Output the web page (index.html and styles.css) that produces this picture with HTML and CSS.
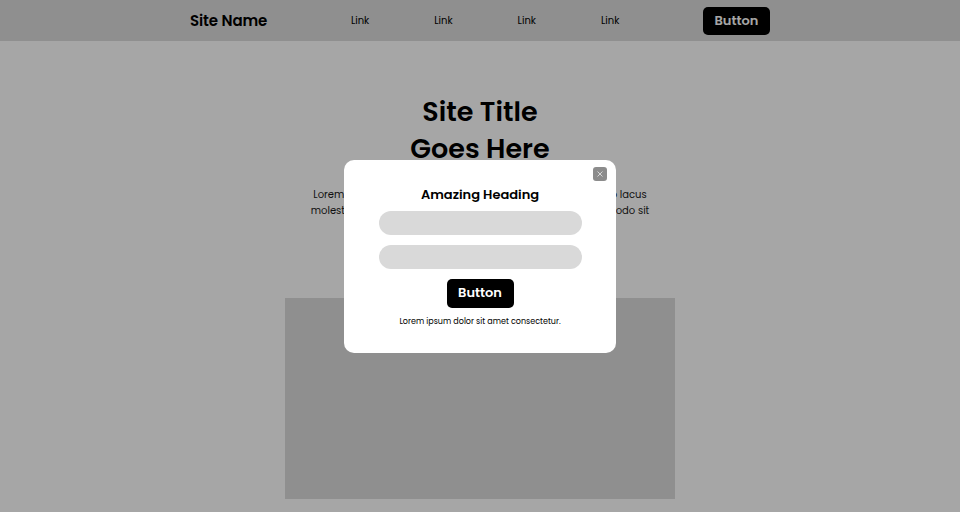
FILE: index.html
```html
<!DOCTYPE html>
<html lang="en">
<head>
<meta charset="utf-8">
<title>Site</title>
<link rel="stylesheet" href="styles.css">
</head>
<body>
<header class="nav">
  <div class="nav-inner">
    <div class="brand">Site Name</div>
    <nav class="links">
      <a href="#">Link</a>
      <a href="#">Link</a>
      <a href="#">Link</a>
      <a href="#">Link</a>
    </nav>
    <a class="btn nav-btn" href="#">Button</a>
  </div>
</header>
<main class="hero">
  <h1 class="title">Site Title<br>Goes Here</h1>
  <p class="lead">Lorem ipsum dolor sit amet consectetur. Nibh duis cursus leo lacus<br>molestie vitae amet enim vel nisl tortor urna mauris in commodo sit</p>
  <div class="picture"></div>
</main>
<div class="overlay">
  <div class="modal">
    <button class="close" aria-label="Close">
      <svg width="6" height="6" viewBox="0 0 6 6"><path d="M0.5 0.5L5.5 5.5M5.5 0.5L0.5 5.5" stroke="#d6d6d6" stroke-width="1"/></svg>
    </button>
    <h2 class="modal-title">Amazing Heading</h2>
    <div class="field"></div>
    <div class="field"></div>
    <a class="btn modal-btn" href="#">Button</a>
    <p class="note">Lorem ipsum dolor sit amet consectetur.</p>
  </div>
</div>
</body>
</html>
```
FILE: styles.css
```css
* { box-sizing: border-box; }
html, body { margin: 0; padding: 0; }
body {
  font-family: "Poppins", "DejaVu Sans", "Open Sans", sans-serif;
  background: #ffffff;
  color: #000;
  height: 512px;
  overflow: hidden;
}
a { text-decoration: none; color: inherit; }

.nav {
  background: #dcdcdc;
  height: 41px;
}
.nav-inner {
  width: 580px;
  margin: 0 auto;
  height: 41px;
  display: flex;
  align-items: center;
  justify-content: space-between;
}
.brand {
  font-size: 15px;
  font-weight: 600;
  letter-spacing: -0.1px;
}
.links {
  display: flex;
  gap: 65px;
  font-size: 10px;
}
.btn {
  background: #000;
  color: #fff;
  font-weight: 600;
  font-size: 13px;
  border-radius: 5px;
  display: inline-flex;
  align-items: center;
  justify-content: center;
}
.nav-btn {
  width: 67px;
  height: 28px;
}

.hero {
  display: flex;
  flex-direction: column;
  align-items: center;
  text-align: center;
}
.title {
  margin: 52px 0 0;
  font-size: 27px;
  line-height: 37px;
  font-weight: 600;
}
.lead {
  margin: 20px 0 0;
  width: 360px;
  font-size: 10px;
  line-height: 16px;
  color: #1a1a1a;
}
.picture {
  margin-top: 79px;
  width: 390px;
  height: 201px;
  background: #dcdcdc;
}

.overlay {
  position: fixed;
  inset: 0;
  background: rgba(0, 0, 0, 0.35);
  display: flex;
  align-items: center;
  justify-content: center;
}
.modal {
  position: relative;
  width: 272px;
  height: 193px;
  background: #fff;
  border-radius: 10px;
  display: flex;
  flex-direction: column;
  align-items: center;
  padding-top: 26px;
}
.close {
  position: absolute;
  top: 7px;
  right: 9px;
  width: 14px;
  height: 14px;
  border: none;
  padding: 0;
  border-radius: 3px;
  background: #8c8c8c;
  display: flex;
  align-items: center;
  justify-content: center;
}
.modal-title {
  margin: 0;
  font-size: 13px;
  line-height: 18px;
  font-weight: 600;
}
.field {
  width: 203px;
  height: 24px;
  border-radius: 12px;
  background: #d9d9d9;
  margin-top: 7px;
}
.field + .field { margin-top: 10px; }
.modal-btn {
  margin-top: 10px;
  width: 67px;
  height: 29px;
}
.note {
  margin: 8px 0 0;
  font-size: 8px;
  line-height: 12px;
}
```
